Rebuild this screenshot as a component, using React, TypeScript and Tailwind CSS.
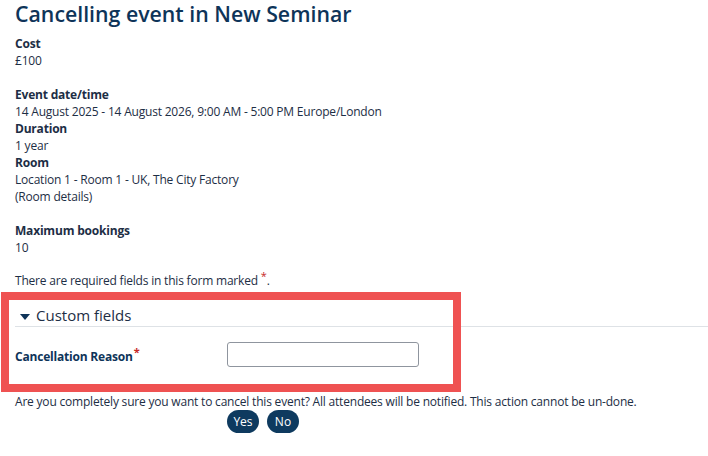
export default function App() {
  return (
    <div className="min-h-[456px] bg-white pl-[15px] text-[12px] leading-[17px] tracking-[-0.2px] text-[#1d2e45] font-['Open_Sans',sans-serif]">
      <h1 className="text-[21.3px] leading-[28px] tracking-normal font-semibold text-[#0e3459]">Cancelling event in New Seminar</h1>

      <div className="mt-[7px]">
        <div className="font-bold">Cost</div>
        <div>£100</div>
      </div>

      <div className="mt-[17px]">
        <div className="font-bold">Event date/time</div>
        <div>14 August 2025 - 14 August 2026, 9:00 AM - 5:00 PM Europe/London</div>
        <div className="font-bold">Duration</div>
        <div>1 year</div>
        <div className="font-bold">Room</div>
        <div>Location 1 - Room 1 - UK, The City Factory</div>
        <div>(Room details)</div>
      </div>

      <div className="mt-[17px]">
        <div className="font-bold">Maximum bookings</div>
        <div>10</div>
      </div>

      <p className="mt-[16px]">
        There are required fields in this form marked{" "}
        <span className="relative -top-[5px] text-[11px] text-[#c62828]">*</span>.
      </p>

      <div className="relative mt-[16px]">
        <div className="flex items-center gap-[6px] pl-[5px] h-[22px] border-b border-[#dee2e6] text-[15px] tracking-normal text-[#1d2e45]">
          <svg width="10" height="6" viewBox="0 0 10 6" className="mt-[2px]">
            <path d="M0 0h10L5 6z" fill="#0e3459" />
          </svg>
          <span>Custom fields</span>
        </div>

        <div className="flex items-center h-[56px] pb-[2px]">
          <label className="w-[212px] pt-[5px] font-bold text-[#0e3459]">
            Cancellation Reason
            <span className="relative -top-[5px] ml-[1px] text-[11px] text-[#c62828]">*</span>
          </label>
          <input className="w-[192px] h-[25px] rounded-[3px] border border-[#8f959e] bg-white px-2 outline-none" />
        </div>

        <div className="pointer-events-none absolute left-[-14px] top-[-13px] w-[460px] h-[100px] border-[8px] border-[#ef5252]" />
      </div>

      <p className="mt-[10px]">
        Are you completely sure you want to cancel this event? All attendees will be notified. This action cannot be un-done.
      </p>

      <div className="mt-0 flex gap-[8px] pl-[212px]">
        <button className="h-[23px] w-[32px] rounded-full bg-[#0e3a5f] text-[12px] tracking-normal text-white">Yes</button>
        <button className="h-[23px] w-[32px] rounded-full bg-[#0e3a5f] text-[12px] tracking-normal text-white">No</button>
      </div>
    </div>
  );
}
